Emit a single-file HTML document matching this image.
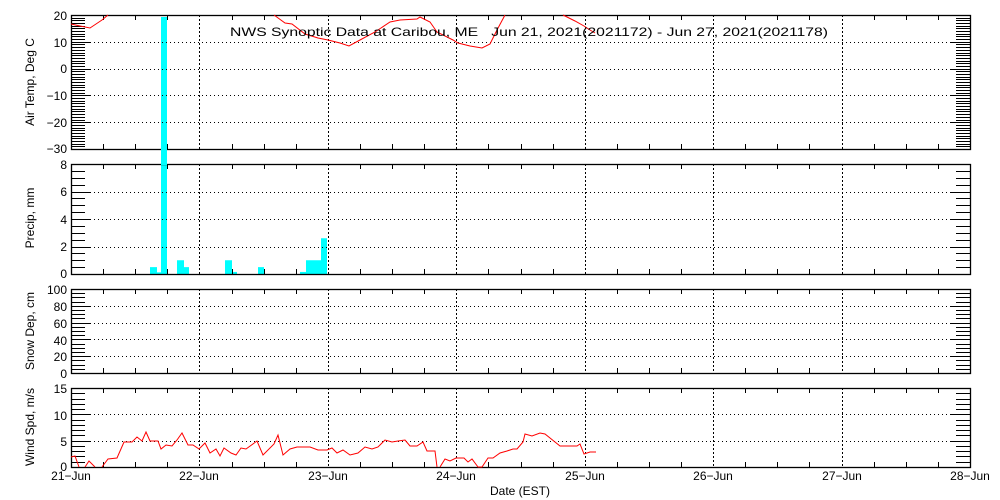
<!DOCTYPE html>
<html><head><meta charset="utf-8"><style>
html,body{margin:0;padding:0;background:#fff;width:1000px;height:500px;overflow:hidden}
svg{display:block}
text{font-family:"Liberation Sans",sans-serif;font-size:12px;fill:#000;white-space:pre}
</style></head><body>
<svg id="s" width="1000" height="500" xmlns="http://www.w3.org/2000/svg">
<g id="g"></g>
<text x="230" y="36" font-size="14" textLength="598" lengthAdjust="spacingAndGlyphs">NWS Synoptic Data at Caribou, ME   Jun 21, 2021(2021172) - Jun 27, 2021(2021178)</text>
<g text-anchor="end">
<text x="67" y="20">20</text><text x="67" y="47">10</text><text x="67" y="73">0</text><text x="67" y="100">−10</text><text x="67" y="127">−20</text><text x="67" y="153">−30</text>
<text x="67" y="169">8</text><text x="67" y="196">6</text><text x="67" y="224">4</text><text x="67" y="251">2</text><text x="67" y="278">0</text>
<text x="67" y="294">100</text><text x="67" y="311">80</text><text x="67" y="328">60</text><text x="67" y="345">40</text><text x="67" y="361">20</text><text x="67" y="378">0</text>
<text x="67" y="393">15</text><text x="67" y="420">10</text><text x="67" y="446">5</text><text x="67" y="471">0</text>
</g>
<g text-anchor="middle">
<text x="71" y="480">21−Jun</text><text x="199" y="480">22−Jun</text><text x="328" y="480">23−Jun</text><text x="456" y="480">24−Jun</text><text x="585" y="480">25−Jun</text><text x="713" y="480">26−Jun</text><text x="842" y="480">27−Jun</text><text x="970" y="480">28−Jun</text>
<text x="520" y="495" font-size="13">Date (EST)</text>
<text transform="translate(34,82) rotate(-90)" font-size="13">Air Temp, Deg C</text>
<text transform="translate(34,218) rotate(-90)" font-size="13">Precip, mm</text>
<text transform="translate(34,331) rotate(-90)" font-size="13">Snow Dep, cm</text>
<text transform="translate(34,427) rotate(-90)" font-size="13">Wind Spd, m/s</text>
</g>
</svg>
<script>
var g=document.getElementById('g'),h='';
var L=71,R=970,D=128.43;
function ln(x1,y1,x2,y2,e){h+='<line x1="'+x1+'" y1="'+y1+'" x2="'+x2+'" y2="'+y2+'" stroke="#000" stroke-width="1" '+(e||'')+'/>';}
var P=[[15,149,-30,20,1,10],[164,274,0,8,0.5,2],[289,373,0,100,5,20],[388,467,0,15,1,5]];
var bars=[[150,157,0.5],[157,161,0.12],[177,184,1],[184,189,0.5],[225,232,1],[232,237,0.15],[258,264,0.5],[300,306,0.15],[306,321,1],[321,327,2.6]];
bars.forEach(function(b){var y=274-b[2]*13.75;h+='<rect x="'+b[0]+'" y="'+y+'" width="'+(b[1]-b[0])+'" height="'+(274-y)+'" fill="#0ff"/>';});
h+='<rect x="161" y="17" width="6" height="257" fill="#0ff"/>';
P.forEach(function(p){
 var t=p[0],b=p[1],lo=p[2],hi=p[3];
 function Y(v){return b-(v-lo)/(hi-lo)*(b-t);}
 for(var v=lo;v<=hi+1e-6;v+=p[4]){var y=Math.round(Y(v))+0.5;var maj=Math.abs(v/p[5]-Math.round(v/p[5]))<1e-6;
  var l=maj?19:14;ln(L,y,L+l,y);ln(R-l,y,R,y);
  if(maj&&v>lo+1e-6&&v<hi-1e-6)ln(L+19,y,R-19,y,'stroke-dasharray="1,3"');}
 for(var d=0;d<=28;d++){var x=Math.round(L+d*D/4)+0.5;
  if(d%4==0){if(d>0&&d<28)ln(x,t,x,b,'stroke-dasharray="2,2"');}
  else{ln(x,t,x,t+5);ln(x,b-5,x,b);}}
 h+='<rect x="'+(L+0.5)+'" y="'+(t+0.5)+'" width="'+(R-L)+'" height="'+(b-t)+'" fill="none" stroke="#000" stroke-width="1.3"/>';
});
h+='<rect x="161" y="148" width="6" height="17" fill="#0ff"/>';
function pl(pts){h+='<polyline fill="none" stroke="#f00" stroke-width="1" points="'+pts+'"/>';}
pl('71,24 80,26 90,28 96,24 102,20 108,15');
pl('274,15 285,23 292,24 305,34 318,38 328,40 340,43 349,46 360,40 375,32 390,22 400,20 417,19 420,17 430,22 437,32 453,40 458,43 470,46 482,48 490,44 497,30 505,15');
pl('563,15 575,21 584,26 590,30 595,33');
pl('71,457 75,456 79,467');
pl('85,467 89,461 95,467');
pl('102,467 108,459 117,458 124,442 132,442 137,437 142,441 146,432 150,441 158,441 161,449 166,445 172,446 177,440 182,433 188,445 193,445 199,449 205,443 210,453 216,449 220,456 224,448 231,453 236,455 241,448 246,449 257,441 263,455 274,444 278,435 283,455 290,449 297,447 310,447 318,450 327,450 332,448 337,453 343,450 350,455 358,453 365,447 372,449 378,447 385,440 392,442 398,441 405,440 410,446 417,446 423,442 427,451 435,451 437,467');
pl('440,467 445,459 450,461 456,458 464,458 468,462 472,459 478,467 482,467 488,458 493,458 500,453 507,451 513,449 517,449 523,442 525,434 532,436 540,433 545,434 555,442 560,446 577,446 580,444 584,454 590,452 596,452');
g.innerHTML=h;
</script>
</body></html>
